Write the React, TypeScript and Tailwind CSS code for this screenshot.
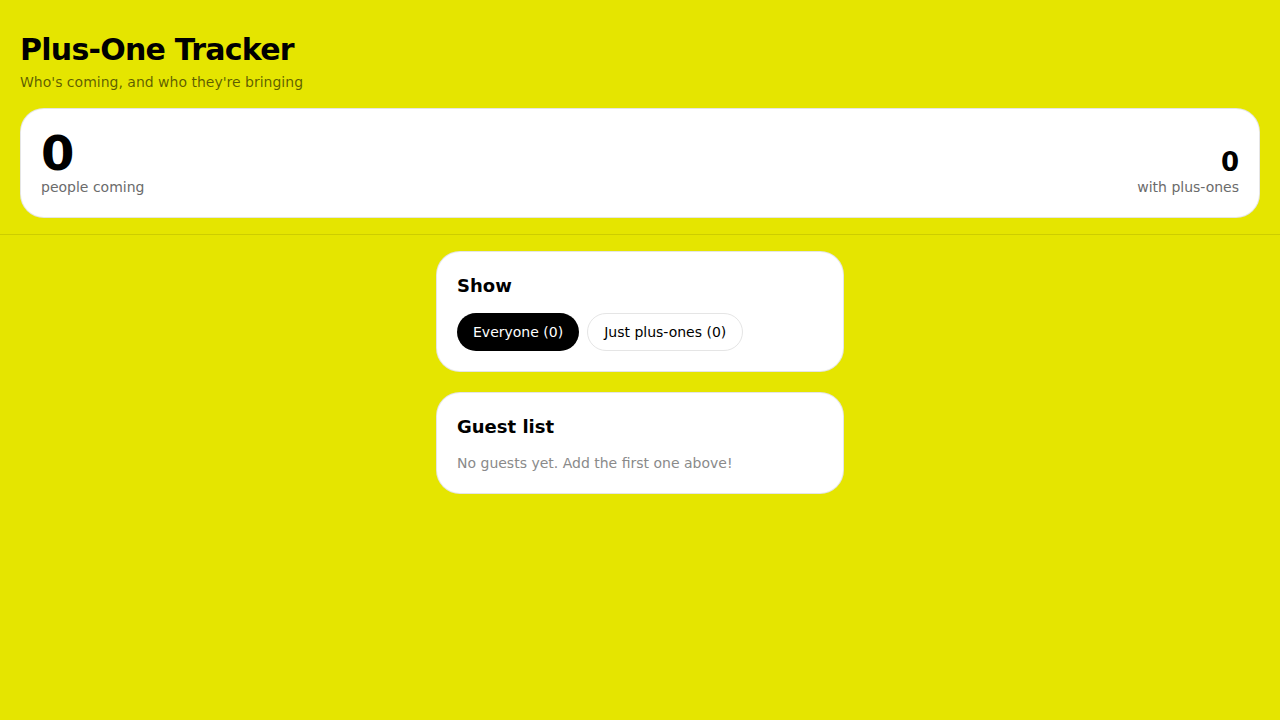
import React, { useState } from 'react';

type Filter = 'all' | 'plus';

const App = () => {
  const [filter, setFilter] = useState<Filter>('all');
  const guests: { name: string; plusOne: boolean }[] = [];
  const plusOnes = guests.filter((g) => g.plusOne).length;
  const coming = guests.length + plusOnes;

  const pill = (active: boolean) =>
    active
      ? 'h-[38px] rounded-full bg-black px-4 text-sm text-white'
      : 'h-[38px] rounded-full border border-[#e5e5e5] bg-white px-4 text-sm text-black';

  return (
    <div className="min-h-screen bg-[#e5e500] text-black" style={{ fontFamily: '"DejaVu Sans", sans-serif' }}>
      {/* Header */}
      <header className="px-5 pt-8 pb-4 border-b border-black/10">
        <h1 className="text-3xl font-bold leading-9 tracking-tight">Plus-One Tracker</h1>
        <p className="mt-1 text-sm text-black/60">Who's coming, and who they're bringing</p>

        <div className="mt-4 flex items-end justify-between rounded-3xl border border-black/10 bg-white p-5">
          <div>
            <div className="text-5xl font-bold leading-none">{coming}</div>
            <div className="text-sm text-[#6b6b6b]">people coming</div>
          </div>
          <div className="text-right">
            <div className="mb-[2px] text-[26px] font-bold leading-none">{plusOnes}</div>
            <div className="text-sm text-[#6b6b6b]">with plus-ones</div>
          </div>
        </div>
      </header>

      {/* Main */}
      <main className="mx-auto flex w-[408px] flex-col gap-5 py-4">
        <section className="rounded-3xl border border-black/10 bg-white p-5">
          <h2 className="text-lg font-bold leading-7">Show</h2>
          <div className="mt-[13px] flex gap-2">
            <button onClick={() => setFilter('all')} className={pill(filter === 'all')}>
              Everyone ({guests.length})
            </button>
            <button onClick={() => setFilter('plus')} className={pill(filter === 'plus')}>
              Just plus-ones ({plusOnes})
            </button>
          </div>
        </section>

        <section className="rounded-3xl border border-black/10 bg-white p-5">
          <h2 className="text-lg font-bold leading-7">Guest list</h2>
          <p className="mt-3 text-sm text-[#8a8a8a]">No guests yet. Add the first one above!</p>
        </section>
      </main>
    </div>
  );
};

export default App;
